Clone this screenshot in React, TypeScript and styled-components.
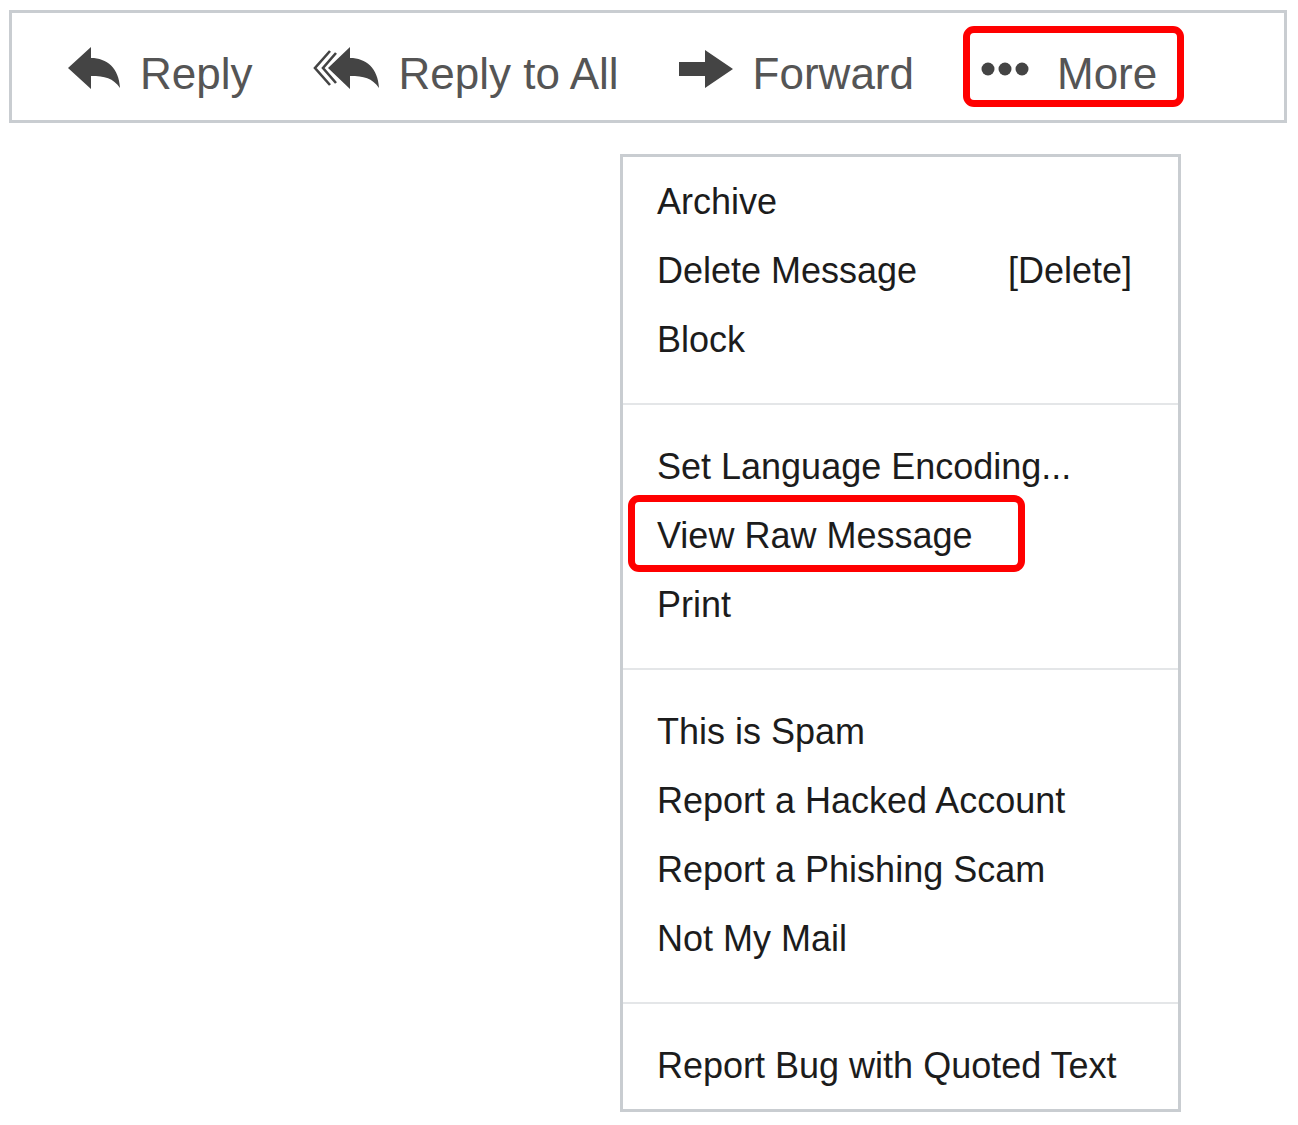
import styled, { createGlobalStyle } from "styled-components"

const GlobalStyle = createGlobalStyle`
   html, body {
      margin: 0;
      padding: 0;
      background: #ffffff;
   }
   body {
      font-family: "Liberation Sans", Arial, Helvetica, sans-serif;
   }
`

const ReplyIcon = () => (
   <svg width="52" height="44" viewBox="0 0 52 44">
      <path d="M0 21 L23 0 V11 C39 11 51 21 52 41 C45 31 37 29 23 29 V42 Z" fill="#444" />
   </svg>
)

const ReplyAllIcon = () => (
   <svg width="66" height="44" viewBox="0 0 66 44">
      <path d="M17 4 L2 21 L17 38" fill="none" stroke="#444" strokeWidth="2.6" />
      <path d="M23 6 L10 21 L23 36" fill="none" stroke="#444" strokeWidth="2.6" />
      <path d="M15 21 L37 0 V11 C53 11 65 21 66 41 C59 31 51 29 37 29 V42 Z" fill="#444" />
   </svg>
)

const ForwardIcon = () => (
   <svg width="54" height="44" viewBox="0 0 54 44">
      <path d="M0 15 H26 V3 L54 22 L26 41 V29 H0 Z" fill="#444" />
   </svg>
)

const DotsIcon = () => (
   <svg width="56" height="44" viewBox="0 0 56 44">
      <circle cx="7" cy="22" r="6.5" fill="#444" />
      <circle cx="24" cy="22" r="6.5" fill="#444" />
      <circle cx="41" cy="22" r="6.5" fill="#444" />
   </svg>
)

const actions = [
   { label: "Reply", icon: <ReplyIcon /> },
   { label: "Reply to All", icon: <ReplyAllIcon /> },
   { label: "Forward", icon: <ForwardIcon /> },
   { label: "More", icon: <DotsIcon />, highlighted: true },
]

interface MenuEntry {
   label: string
   shortcut?: string
   highlighted?: boolean
}

const sections: MenuEntry[][] = [
   [{ label: "Archive" }, { label: "Delete Message", shortcut: "[Delete]" }, { label: "Block" }],
   [{ label: "Set Language Encoding..." }, { label: "View Raw Message", highlighted: true }, { label: "Print" }],
   [
      { label: "This is Spam" },
      { label: "Report a Hacked Account" },
      { label: "Report a Phishing Scam" },
      { label: "Not My Mail" },
   ],
   [{ label: "Report Bug with Quoted Text" }],
]

const App = () => {
   return (
      <Page>
         <GlobalStyle />
         <Toolbar>
            {actions.map((a) => (
               <ActionButton key={a.label} highlighted={!!a.highlighted}>
                  {a.icon}
                  <ActionLabel>{a.label}</ActionLabel>
               </ActionButton>
            ))}
         </Toolbar>
         <Menu>
            {sections.map((section, i) => (
               <Section key={i}>
                  {i > 0 && <Separator />}
                  {section.map((item) => (
                     <MenuItem key={item.label}>
                        <ItemLabel highlighted={!!item.highlighted}>{item.label}</ItemLabel>
                        {item.shortcut && <Shortcut>{item.shortcut}</Shortcut>}
                     </MenuItem>
                  ))}
               </Section>
            ))}
         </Menu>
      </Page>
   )
}

export default App

// Styled Components

const Page = styled.div`
   display: flex;
   flex-direction: column;
   padding: 10px 11px 20px 9px;
`

const Toolbar = styled.div`
   box-sizing: border-box;
   height: 113px;
   display: flex;
   align-items: center;
   gap: 60px;
   padding: 4px 0 0 56px;
   border: 3px solid #c9cdd1;
   background: #fff;
`

const ActionButton = styled.div<{ highlighted: boolean }>`
   display: flex;
   align-items: center;
   gap: 20px;
   color: #555;
   cursor: pointer;
   border-radius: 4px;
   ${({ highlighted }) =>
      highlighted
         ? `
      padding: 6px 20px 2px 11px;
      margin: -6px 0 -2px -4px;
      outline: 7px solid #ff0000;
   `
         : ""}

   svg {
      flex-shrink: 0;
   }
`

const ActionLabel = styled.span`
   font-size: 44px;
   line-height: 49px;
   padding-top: 10px;
   white-space: nowrap;
`

const Menu = styled.div`
   box-sizing: border-box;
   width: 561px;
   margin: 31px 0 0 611px;
   padding: 10px 0 9px;
   border: 3px solid #c9cdd1;
   background: #fff;
`

const Section = styled.div`
   display: flex;
   flex-direction: column;
`

const Separator = styled.div`
   height: 2px;
   margin: 29px 0 27px;
   background: #e4e6e8;
`

const MenuItem = styled.div`
   height: 69px;
   display: flex;
   align-items: center;
   justify-content: space-between;
   padding: 0 46px 0 34px;
   font-size: 36px;
   line-height: 41px;
   color: #1c1c1c;
   white-space: nowrap;
`

const ItemLabel = styled.span<{ highlighted: boolean }>`
   border-radius: 4px;
   ${({ highlighted }) =>
      highlighted
         ? `
      padding: 13px 46px 9px 22px;
      margin: -13px -46px -9px -22px;
      outline: 7px solid #ff0000;
   `
         : ""}
`

const Shortcut = styled.span`
   color: #1c1c1c;
`
